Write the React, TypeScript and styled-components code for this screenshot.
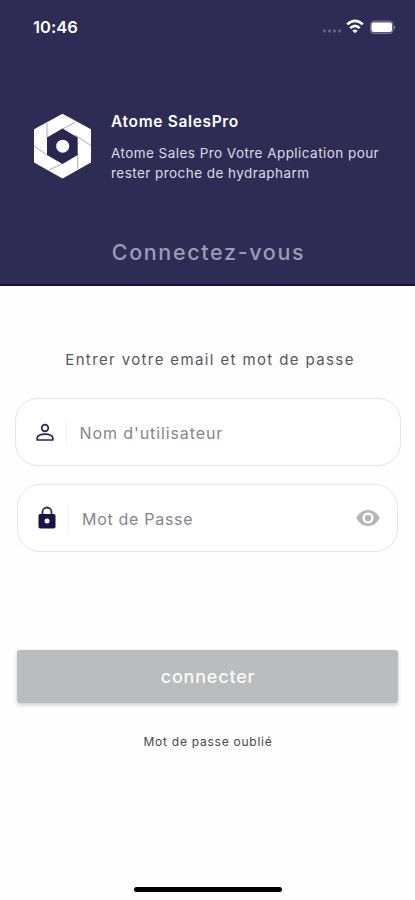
import React from "react";
import styled, { createGlobalStyle } from "styled-components";

const GlobalStyle = createGlobalStyle`
  * { box-sizing: border-box; }
  body { margin: 0; background: #fff; font-family: Inter, "Liberation Sans", sans-serif; }
`;

const Screen = styled.main`
  display: flex;
  flex-direction: column;
  width: 415px;
  height: 900px;
  background: #fefefe;
  overflow: hidden;
`;

const Header = styled.header`
  display: flex;
  flex-direction: column;
  height: 286px;
  background: #2e2c54;
  border-bottom: 2px solid #17104a;
`;

const StatusBar = styled.div`
  display: flex;
  align-items: center;
  justify-content: space-between;
  height: 54px;
  padding: 0 18px 0 33px;
`;

const Clock = styled.time`
  color: #fff;
  font-size: 16.5px;
  font-weight: 600;
  line-height: 20px;
  letter-spacing: 0.05px;
`;

const StatusIcons = styled.div`
  display: flex;
  align-items: center;
`;

const Brand = styled.section`
  display: flex;
  height: 132px;
  padding: 59px 0 0 33px;
`;

const BrandText = styled.div`
  margin: -2px 0 0 19px;
  color: #fff;
  white-space: nowrap;
`;

const BrandName = styled.h1`
  margin: 0;
  font-size: 15.5px;
  font-weight: 600;
  line-height: 21px;
  letter-spacing: 0.66px;
`;

const Tagline = styled.p`
  margin: 11px 0 0;
  color: #dcdbe6;
  font-size: 13.5px;
  font-weight: 400;
  line-height: 20px;
  letter-spacing: 0.45px;
`;

const Title = styled.h2`
  margin: 52px 0 0;
  color: #9c9bb8;
  font-size: 21.5px;
  font-weight: 500;
  line-height: 28px;
  letter-spacing: 1.65px;
  text-indent: 2px;
  text-align: center;
`;

const Form = styled.form`
  display: flex;
  flex-direction: column;
  align-items: center;
`;

const Prompt = styled.p`
  margin: 64px 0 0 5px;
  color: #57575d;
  font-size: 15px;
  line-height: 20px;
  letter-spacing: 1.38px;
  white-space: nowrap;
`;

const Field = styled.label<{ $width: number; $gap: number }>`
  display: flex;
  align-items: center;
  width: ${(p) => p.$width}px;
  height: 68px;
  margin-top: ${(p) => p.$gap}px;
  padding: 0 17px 0 18px;
  border: 1px solid #e4e4ee;
  border-radius: 23px;
  background: #fff;
`;

const Divider = styled.span`
  width: 1px;
  height: 25px;
  margin: 0 12px 0 10px;
  background: #f1f1f5;
`;

const Placeholder = styled.span<{ $spacing: number }>`
  flex: 1;
  padding: 1px 0 0 1px;
  color: #85858f;
  font-size: 16px;
  line-height: 22px;
  letter-spacing: ${(p) => p.$spacing}px;
`;

const Submit = styled.button`
  width: 381px;
  height: 53px;
  margin-top: 98px;
  padding: 0;
  border: 0;
  border-radius: 3px;
  background: #babcbd;
  box-shadow: 0 2px 4px rgba(0, 0, 0, 0.2);
  color: #fafafa;
  font-family: inherit;
  font-size: 18px;
  font-weight: 500;
  letter-spacing: 0.8px;
  text-indent: 1px;
`;

const Forgot = styled.a`
  margin: 30px 0 0 1px;
  color: #46464e;
  font-size: 12px;
  line-height: 17px;
  letter-spacing: 0.75px;
`;

const HomeIndicator = styled.div`
  width: 148px;
  height: 5px;
  margin: auto auto 8px 134px;
  border-radius: 3px;
  background: #000;
`;

const Signal = () => (
  <svg width="20" height="18" viewBox="0 0 20 18" fill="#65637f">
    {[0, 5, 10, 15].map((x) => (
      <rect key={x} x={x} y="11.5" width="3" height="3" rx="1" />
    ))}
  </svg>
);

const Wifi = () => (
  <svg width="26" height="18" viewBox="0 0 26 18" fill="none" stroke="#fff" strokeWidth="2.6">
    <path d="M4.2 6.4 Q12 -.6 19.8 6.4" />
    <path d="M7.2 10.1 Q12 5.8 16.8 10.1" />
    <path d="M9.3 12.4 Q12 10.4 14.7 12.4 L12 15.2Z" fill="#fff" stroke="none" />
  </svg>
);

const Battery = () => (
  <svg width="28" height="18" viewBox="0 0 28 18">
    <rect x="1.5" y="3" width="22.5" height="12.5" rx="3.5" fill="#57557a" stroke="#77758f" />
    <rect x="2.5" y="4.5" width="20.5" height="9.5" rx="2.2" fill="#fff" />
    <path d="M25 7.2 Q27.5 9.2 25 11.2Z" fill="#918fa6" />
  </svg>
);

const Logo = () => (
  <svg width="59" height="66" viewBox="0 0 59 66">
    <path
      d="M29.5 2 L57 17 V49 L29.5 64.5 L2 49 V17Z"
      fill="#fff"
      stroke="#fff"
      strokeWidth="2"
      strokeLinejoin="round"
    />
    <path
      d="M29.5 16 L42 9.5 M42 22 L58 32.5 M44.7 40 V56 M29.5 50.5 L16 57 M14 42 L1 33 M14 25 V10"
      stroke="#aaa9b6"
      strokeWidth="1"
      fill="none"
    />
    <path d="M29.5 15.5 L44.7 24.5 V42 L29.5 51 L14 42 V24.5Z" fill="#29264f" />
    <circle cx="29.7" cy="33.2" r="6.5" fill="#fff" />
  </svg>
);

const UserIcon = () => (
  <svg width="22" height="22" viewBox="0 0 22 22" fill="none" stroke="#27254a" strokeWidth="1.7">
    <circle cx="11" cy="7" r="3.3" />
    <path
      d="M3.2 19 V16.8 C3.2 14.3 7.5 13.1 11 13.1 S18.8 14.3 18.8 16.8 V19Z"
      strokeLinejoin="round"
    />
  </svg>
);

const LockIcon = () => (
  <svg width="22" height="24" viewBox="0 0 22 24">
    <path d="M6.5 9 V6 A4.5 4.5 0 0 1 15.5 6 V9" fill="none" stroke="#302e52" strokeWidth="1.8" />
    <rect x="2.5" y="8" width="17" height="14.5" rx="1.8" fill="#1a1549" />
    <circle cx="11" cy="15" r="2.5" fill="#fff" />
  </svg>
);

const EyeIcon = () => (
  <svg width="24" height="18" viewBox="0 0 24 18">
    <path
      d="M.5 9 C2.5 4 7 1 12 1 S21.5 4 23.5 9 C21.5 14 17 17 12 17 S2.5 14 .5 9Z"
      fill="#b5b5b5"
    />
    <circle cx="12" cy="9" r="5.6" fill="#fff" />
    <circle cx="12" cy="9" r="3.2" fill="#b5b5b5" />
  </svg>
);

export default function App() {
  return (
    <>
      <GlobalStyle />
      <Screen>
        <Header>
          <StatusBar>
            <Clock>10:46</Clock>
            <StatusIcons>
              <Signal />
              <Wifi />
              <Battery />
            </StatusIcons>
          </StatusBar>
          <Brand>
            <Logo />
            <BrandText>
              <BrandName>Atome SalesPro</BrandName>
              <Tagline>
                Atome Sales Pro Votre Application pour
                <br />
                rester proche de hydrapharm
              </Tagline>
            </BrandText>
          </Brand>
          <Title>Connectez-vous</Title>
        </Header>
        <Form>
          <Prompt>Entrer votre email et mot de passe</Prompt>
          <Field $width={386} $gap={28}>
            <UserIcon />
            <Divider />
            <Placeholder $spacing={0.9}>Nom d'utilisateur</Placeholder>
          </Field>
          <Field $width={381} $gap={18}>
            <LockIcon />
            <Divider />
            <Placeholder $spacing={0.7}>Mot de Passe</Placeholder>
            <EyeIcon />
          </Field>
          <Submit type="button">connecter</Submit>
          <Forgot>Mot de passe oublié</Forgot>
        </Form>
        <HomeIndicator />
      </Screen>
    </>
  );
}
